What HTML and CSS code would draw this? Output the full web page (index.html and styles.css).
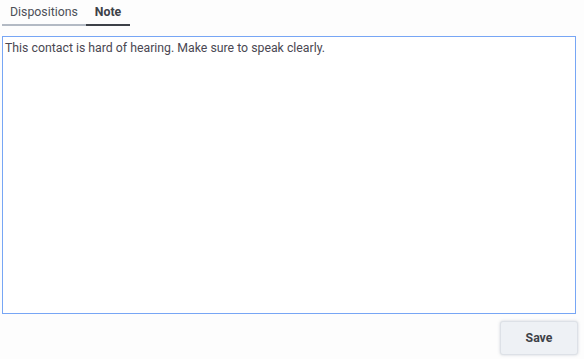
FILE: index.html
```html
<!DOCTYPE html>
<html>
<head>
	<meta charset="utf-8">
	<title>Note</title>
	<link rel="stylesheet" href="styles.css">
</head>
<body>
	<div class="panel">
		<div class="tabs">
			<div class="tab">Dispositions</div>
			<div class="tab activo">Note</div>
		</div>
		<div class="nota">This contact is hard of hearing. Make sure to speak clearly.</div>
		<div class="pie">
			<button class="guardar">Save</button>
		</div>
	</div>
</body>
</html>
```

FILE: styles.css
```css
*{box-sizing: border-box;}
body{
	margin: 0;
	background: #fdfdfd;
	font-family: Roboto, "Liberation Sans", sans-serif;
	color: #4c4f57;
}
.panel{
	width: 584px;
	height: 359px;
	padding: 0 8px 4px 2px;
	display: flex;
	flex-direction: column;
}
.tabs{
	display: flex;
	height: 26px;
	align-items: flex-end;
}
.tab{
	font-size: 12.3px;
	padding: 0 8px 5px 8px;
	border-bottom: 2px solid #b3bac4;
	color: #4c4f57;
}
.activo{
	font-weight: bold;
	padding: 0 9px 5px 9px;
	border-bottom-color: #3d4148;
	color: #3d4148;
}
.nota{
	margin-top: 10px;
	height: 278px;
	background: #ffffff;
	border: 1px solid #77a6f5;
	font-size: 12.3px;
	padding: 4px 2px;
	color: #4a4752;
}
.pie{
	flex: 1;
	display: flex;
	justify-content: flex-end;
	align-items: flex-start;
	padding-top: 7px;
	margin-right: -2px;
}
.guardar{
	width: 78px;
	height: 34px;
	background: #eef1f5;
	border: 1px solid #dde1e7;
	border-radius: 3px;
	box-shadow: 0 0 3px rgba(120,130,150,0.35);
	font-family: Roboto, "Liberation Sans", sans-serif;
	font-weight: bold;
	font-size: 12.3px;
	color: #3d4148;
}
```
